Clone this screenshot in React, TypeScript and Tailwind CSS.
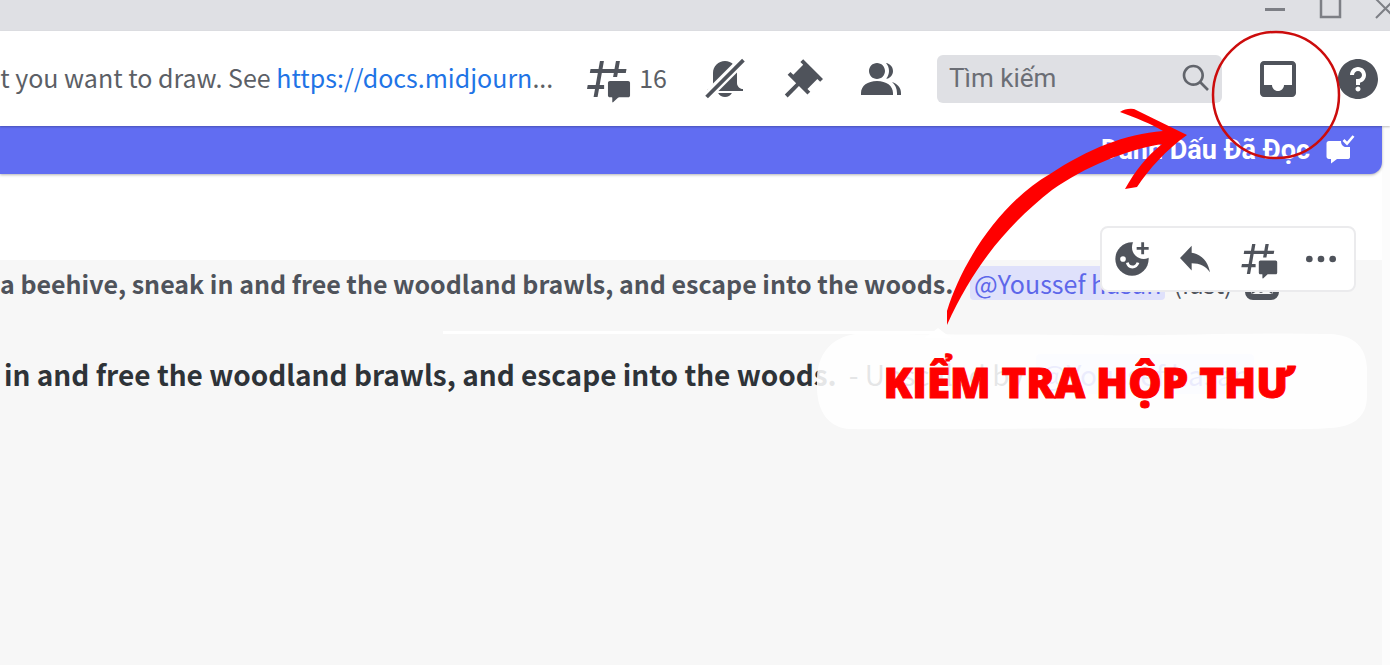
import type { ReactNode } from "react";

function Icon({ className, children }: { className: string; children: ReactNode }) {
  return (
    <svg viewBox="0 0 24 24" fill="currentColor" className={className} aria-hidden="true">
      {children}
    </svg>
  );
}

function ThreadsPaths() {
  return (
    <>
      <path d="M5.43309 21C5.35842 21 5.30189 20.9325 5.31494 20.859L5.99991 17H2.14274C2.06819 17 2.01168 16.9327 2.02453 16.8593L2.33253 15.0993C2.34258 15.0419 2.39244 15 2.45074 15H6.34991L7.40991 9H3.55274C3.47819 9 3.42168 8.93274 3.43453 8.85931L3.74253 7.09931C3.75258 7.04189 3.80244 7 3.86074 7H7.75991L8.45234 3.09903C8.46251 3.04174 8.51231 3 8.57049 3H10.3267C10.4014 3 10.4579 3.06746 10.4449 3.14097L9.75991 7H15.7599L16.4523 3.09903C16.4625 3.04174 16.5123 3 16.5705 3H18.3267C18.4014 3 18.4579 3.06746 18.4449 3.14097L17.7599 7H21.6171C21.6916 7 21.7481 7.06725 21.7353 7.14069L21.4273 8.90069C21.4172 8.95811 21.3674 9 21.3091 9H17.4099L17.0495 11.04H15.05L15.4104 9H9.41035L8.35035 15H10.5599V17H7.99991L7.30749 20.901C7.29732 20.9583 7.24752 21 7.18934 21H5.43309Z" />
      <path d="M13.4399 12.96C12.9097 12.96 12.4799 13.3898 12.4799 13.92V20.2213C12.4799 20.7515 12.9097 21.1813 13.4399 21.1813H14.3999C14.5325 21.1813 14.6399 21.2887 14.6399 21.4213V23.4597C14.6399 23.6677 14.8865 23.7773 15.0408 23.6378L17.4858 21.4289C17.6622 21.2695 17.8916 21.1813 18.1294 21.1813H22.5599C23.0901 21.1813 23.5199 20.7515 23.5199 20.2213V13.92C23.5199 13.3898 23.0901 12.96 22.5599 12.96H13.4399Z" />
    </>
  );
}

function TitleBar() {
  return (
    <div className="flex h-[31px] items-start justify-end overflow-hidden bg-[#dfe0e4] text-[#7d7f85]">
      <button aria-label="Minimize" className="h-5 w-14">
        <svg viewBox="0 0 56 20" className="h-5 w-14" fill="none" stroke="currentColor">
          <path d="M19 9.500H39" strokeWidth="3" />
        </svg>
      </button>
      <button aria-label="Maximize" className="h-5 w-14">
        <svg viewBox="0 0 56 20" className="h-5 w-14" fill="none" stroke="currentColor">
          <rect x="19" y="-2" width="19" height="19" strokeWidth="2.500" />
        </svg>
      </button>
      <button aria-label="Close" className="h-5 w-8">
        <svg viewBox="0 0 32 20" className="h-5 w-8" fill="none" stroke="currentColor">
          <path d="M18 18L37 -1M18 -1L37 18" strokeWidth="2" />
        </svg>
      </button>
    </div>
  );
}

function Header() {
  return (
    <header className="relative z-10 flex h-[95px] items-center gap-8 bg-white pr-2 text-[#4f535b] shadow-[0_1px_2px_rgba(0,0,0,0.25)]">
      <div className="flex min-w-0 flex-1 items-center gap-[30px]">
        <div className="flex min-w-0 flex-1 justify-end overflow-hidden pb-1 text-[25px] leading-10 whitespace-nowrap text-[#5c5f66]">
          <p>
            t you want to draw. See{" "}
            <a href="https://docs.midjourney.com" className="text-[#1f74e6]">
              https://docs.midjourn
            </a>
            ...
          </p>
        </div>
        <button aria-label="Threads" className="flex items-center gap-2 pr-1">
          <Icon className="size-12">
            <ThreadsPaths />
          </Icon>
          <span className="pb-1 text-[25px] leading-10 text-[#5c5f66]">16</span>
        </button>
        <button aria-label="Notification settings">
          <Icon className="size-12">
            <mask id="bell-gap">
              <rect width="24" height="24" fill="#fff" />
              <path d="M1 22.5L22.5 1" stroke="#000" strokeWidth="4.6" />
            </mask>
            <g mask="url(#bell-gap)">
              <path d="M18 9V14C18 15.657 19.344 17 21 17V18H3V17C4.656 17 6 15.657 6 14V9C6 5.686 8.686 3 12 3C15.314 3 18 5.686 18 9Z" />
              <path d="M12 21C10.524 21 9.248 20.195 8.555 19H15.445C14.752 20.195 13.476 21 12 21Z" />
            </g>
            <path d="M2.800 21L21.200 2.600" stroke="currentColor" strokeWidth="1.900" />
          </Icon>
        </button>
        <button aria-label="Pinned messages">
          <Icon className="size-12">
            <path d="M22 12L12.101 2.10101L10.686 3.51401L12.101 4.92901L7.15096 9.87801V9.88001L5.73596 8.46501L4.32196 9.88001L8.56496 14.122L2.90796 19.778L4.32196 21.192L9.97896 15.536L14.222 19.778L15.636 18.364L14.222 16.95L19.171 12H19.172L20.586 13.414L22 12Z" />
          </Icon>
        </button>
        <button aria-label="Member list">
          <Icon className="size-12">
            <path d="M14 8.00598C14 10.211 12.206 12.006 10 12.006C7.795 12.006 6 10.211 6 8.00598C6 5.80098 7.794 4.00598 10 4.00598C12.206 4.00598 14 5.80098 14 8.00598ZM2 19.006C2 15.473 5.29 13.006 10 13.006C14.711 13.006 18 15.473 18 19.006V20.006H2V19.006Z" />
            <path d="M20.0001 20.006H22.0001V19.006C22.0001 16.4433 20.2697 14.4415 17.5213 13.5352C19.0621 14.9127 20.0001 16.8059 20.0001 19.006V20.006Z" />
            <path d="M14.8834 11.9077C16.6657 11.5044 18.0001 9.9077 18.0001 8.00598C18.0001 5.96916 16.4693 4.28218 14.4971 4.0367C15.4322 5.09511 16.0001 6.48524 16.0001 8.00598C16.0001 9.44888 15.4889 10.7742 14.6378 11.8102C14.7203 11.8418 14.8022 11.8743 14.8834 11.9077Z" />
          </Icon>
        </button>
      </div>
      <label className="flex h-12 w-[285px] items-center rounded-md bg-[#dfe0e4] pr-2.5 pb-0.5 pl-3">
        <input
          type="text"
          placeholder="Tìm kiếm"
          aria-label="Tìm kiếm"
          className="min-w-0 flex-1 bg-transparent font-[Roboto,sans-serif] text-[26px] leading-8 outline-none placeholder:text-[#6b6e75]"
        />
        <Icon className="size-8 text-[#62656c]">
          <path d="M21.707 20.293L16.314 14.9C17.403 13.504 18 11.799 18 10C18 7.863 17.167 5.854 15.656 4.344C14.146 2.832 12.137 2 10 2C7.863 2 5.854 2.832 4.344 4.344C2.833 5.854 2 7.863 2 10C2 12.137 2.833 14.146 4.344 15.656C5.854 17.168 7.863 18 10 18C11.799 18 13.504 17.404 14.9 16.314L20.293 21.706L21.707 20.293ZM10 16C8.397 16 6.891 15.376 5.758 14.243C4.624 13.11 4 11.603 4 10C4 8.398 4.624 6.891 5.758 5.758C6.891 4.624 8.397 4 10 4C11.603 4 13.109 4.624 14.242 5.758C15.376 6.891 16 8.398 16 10C16 11.603 15.376 13.11 14.242 14.243C13.109 15.376 11.603 16 10 16Z" />
        </Icon>
      </label>
      <button aria-label="Inbox">
        <Icon className="size-12">
          <path d="M19 3H4.99C3.88 3 3.01 3.89 3.01 5L3 19C3 20.1 3.88 21 4.99 21H19C20.1 21 21 20.1 21 19V5C21 3.89 20.1 3 19 3ZM19 15H15C15 16.66 13.65 18 12 18C10.35 18 9 16.66 9 15H4.99V5H19V15Z" />
        </Icon>
      </button>
      <button aria-label="Help">
        <Icon className="size-12">
          <path d="M12 2C6.486 2 2 6.487 2 12C2 17.515 6.486 22 12 22C17.514 22 22 17.515 22 12C22 6.487 17.514 2 12 2ZM12 18.25C11.31 18.25 10.75 17.691 10.75 17C10.75 16.31 11.31 15.75 12 15.75C12.69 15.75 13.25 16.31 13.25 17C13.25 17.691 12.69 18.25 12 18.25ZM13 13.875V15H11V12H12C13.104 12 14 11.103 14 10C14 8.896 13.104 8 12 8C10.896 8 10 8.896 10 10H8C8 7.795 9.795 6 12 6C14.205 6 16 7.795 16 10C16 11.861 14.723 13.429 13 13.875Z" />
        </Icon>
      </button>
    </header>
  );
}

function UnreadBar() {
  return (
    <button className="flex h-12 w-full items-center justify-end gap-4 rounded-br-xl bg-[#616df2] pr-6 font-[Roboto,sans-serif] text-[27px] leading-8 font-bold text-white shadow-[0_1px_3px_rgba(0,0,0,0.3)]">
      <span>Đánh Dấu Đã Đọc</span>
      <svg viewBox="0 0 32 32" className="size-8" fill="currentColor" aria-hidden="true">
        <path d="M3 7H15C15 10.500 17 13 20 13H24V23C24 24.500 23 25 21.500 25H11L5 29.500V25H3C1.500 25 0.500 24 0.500 22.500V9.500C0.500 8 1.500 7 3 7Z" />
        <path d="M17.500 6L21 9.500L27.500 2" fill="none" stroke="currentColor" strokeWidth="2.600" />
      </svg>
    </button>
  );
}

function MessageActions() {
  return (
    <div className="absolute top-[52px] right-[26px] z-10 flex h-[66px] w-[256px] items-center gap-[23px] rounded-lg border-2 border-[#ebebed] bg-white px-[10px] text-[#4f535b]">
      <button aria-label="Add reaction">
        <Icon className="size-10">
          <mask id="face-cut">
            <rect width="24" height="24" fill="#fff" />
            <circle cx="19" cy="5" r="7" fill="#000" />
            <circle cx="6.600" cy="12" r="1.700" fill="#000" />
            <path d="M9.200 14.200C9.600 16 10.800 16.800 12.200 16.800S15 16 15.600 14.200" fill="none" stroke="#000" strokeWidth="1.700" />
          </mask>
          <circle cx="12" cy="12" r="10" mask="url(#face-cut)" />
          <path d="M18.400 2V9.200M14.800 5.600H22" stroke="currentColor" strokeWidth="1.700" />
        </Icon>
      </button>
      <button aria-label="Reply">
        <Icon className="size-10">
          <path d="M10 8.26667V4L3 11.4667L10 18.9333V14.56C15 14.56 18.5 16.2667 21 20C20 14.6667 17 9.33333 10 8.26667Z" />
        </Icon>
      </button>
      <button aria-label="Create thread">
        <Icon className="size-10">
          <ThreadsPaths />
        </Icon>
      </button>
      <button aria-label="More">
        <Icon className="size-10">
          <circle cx="5" cy="12" r="2" />
          <circle cx="12" cy="12" r="2" />
          <circle cx="19" cy="12" r="2" />
        </Icon>
      </button>
    </div>
  );
}

function Chat() {
  return (
    <main className="relative flex flex-1 flex-col pt-[86px]">
      <MessageActions />
      <section className="flex-1 overflow-hidden bg-[#f7f7f7] whitespace-nowrap">
        <div className="flex items-center pt-1.5 text-[25px] leading-[34px] text-[#4f535b]">
          <strong>a beehive, sneak in and free the woodland brawls, and escape into the woods.</strong>
          <span className="px-1">-</span>
          <span className="rounded-sm bg-[#dfe1fb] px-1 text-[#5d67ea]">@Youssef hasan</span>
          <span className="pr-3 pl-2">(fast)</span>
          <svg viewBox="0 0 34 34" className="size-[34px]" fill="none" stroke="currentColor" aria-hidden="true">
            <rect x="3" y="3" width="28" height="28" rx="5" strokeWidth="6" />
            <path d="M7 27L12 24L16 26L22 23L27 27" strokeWidth="2" />
          </svg>
        </div>
        <div className="flex items-center pt-[54px] pl-1 text-[28px] leading-10 text-[#2e3338]">
          <strong>in and free the woodland brawls, and escape into the woods.</strong>
          <span className="px-3">- Upscaled by</span>
          <span className="rounded-sm bg-[#dfe1fb] px-1 text-[#5d67ea]">@Youssef hasan</span>
        </div>
      </section>
    </main>
  );
}

// Red marker and caption laid over the window, kept to its right edge
function Annotation() {
  return (
    <div className="pointer-events-none absolute top-0 right-0 z-20 h-[440px] w-[950px]">
      <svg viewBox="440 0 950 440" className="h-[440px] w-[950px]" aria-hidden="true">
        <path d="M443 332.500H940" stroke="#fff" strokeWidth="3" />
        <path d="M938 328L951 338H925Z" fill="#fff" />
        <path
          d="M862 333.500C950 335 1010 334 1080 335C1180 336 1250 332 1330 334C1354 335 1366 347 1367 368V396C1367 418 1352 427 1330 428C1290 431 1230 428 1150 428C1050 428 940 430 850 429C829 428 818 412 817 390V378C818 350 836 334 862 333.500Z"
          fill="#fff"
          fillOpacity="0.88"
        />
        <path
          d="M947 325V311C962 262 1000 203 1050 174C1088 149 1125 134 1163 131C1152 124 1136 118 1120 112Q1126 108 1134 109L1187 135C1166 150 1149 169 1137 187L1125 189C1135 171 1147 156 1162 144C1125 150 1085 167 1052 190C1010 223 975 263 947 325Z"
          fill="#ff0000"
        />
        <circle cx="1276" cy="95" r="63" fill="none" stroke="#cc0c0c" strokeWidth="2.500" />
      </svg>
      <p className="absolute top-[352px] right-24 font-['Open_Sans',sans-serif] text-[42px] leading-[60px] font-extrabold whitespace-nowrap text-[#ff0000] [-webkit-text-stroke:1px_#ff0000]">
        KIỂM TRA HỘP THƯ
      </p>
    </div>
  );
}

export default function App() {
  return (
    <div className="relative flex min-h-screen flex-col overflow-hidden bg-white font-['Noto_Sans_CJK_SC','Noto_Sans',sans-serif]">
      <TitleBar />
      <Header />
      <div className="flex flex-1 flex-col border-r-8 border-[#fcfcfc]">
        <UnreadBar />
        <Chat />
      </div>
      <Annotation />
    </div>
  );
}
